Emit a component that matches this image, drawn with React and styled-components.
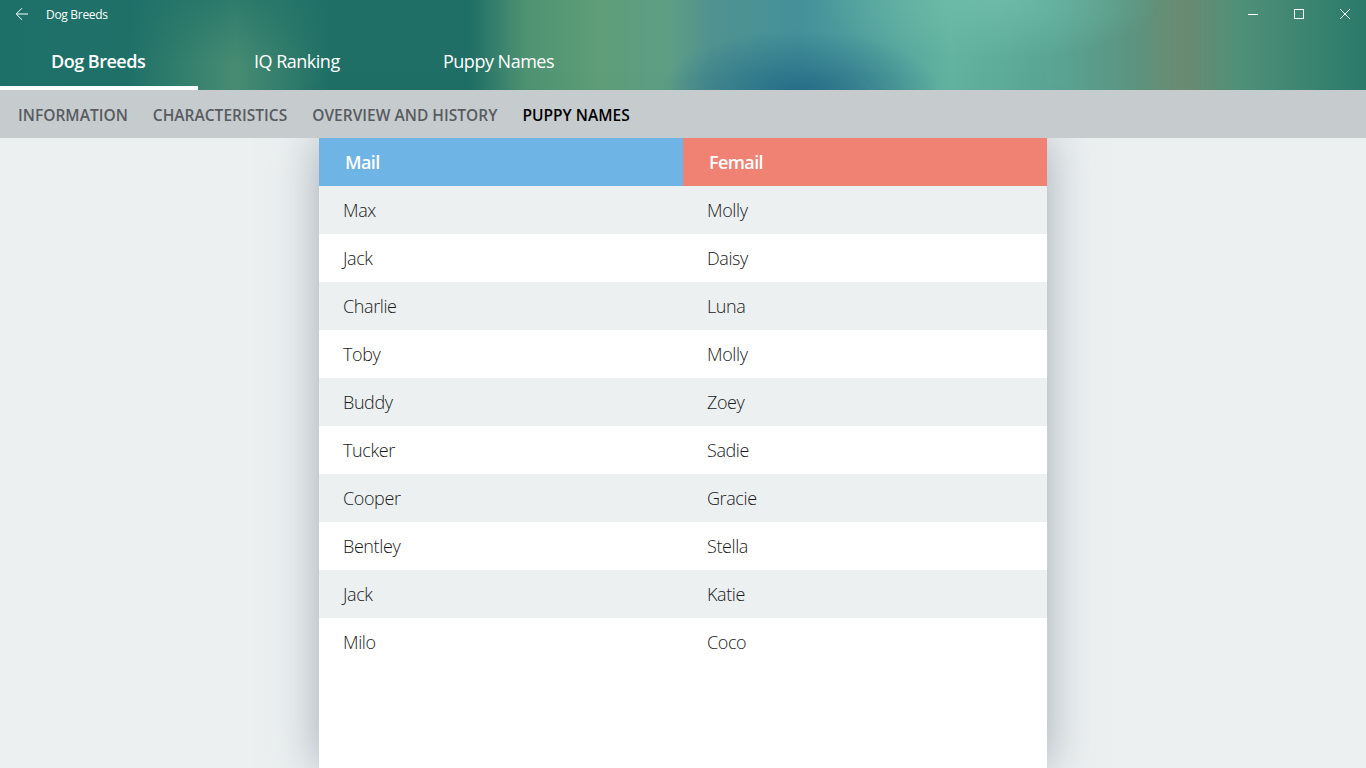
import { createGlobalStyle } from 'styled-components';
import styled from 'styled-components';

const males = ['Max', 'Jack', 'Charlie', 'Toby', 'Buddy', 'Tucker', 'Cooper', 'Bentley', 'Jack', 'Milo'];
const females = ['Molly', 'Daisy', 'Luna', 'Molly', 'Zoey', 'Sadie', 'Gracie', 'Stella', 'Katie', 'Coco'];
const mainTabs = ['Dog Breeds', 'IQ Ranking', 'Puppy Names'];
const subTabs = ['INFORMATION', 'CHARACTERISTICS', 'OVERVIEW AND HISTORY', 'PUPPY NAMES'];

const GlobalStyle = createGlobalStyle`
  html, body {
    margin: 0;
    height: 100%;
    overflow: hidden;
    background: #ecf0f1;
    font-family: "Open Sans", "Noto Sans", sans-serif;
  }
`;

const Page = styled.div`
  height: 768px;
  display: flex;
  flex-direction: column;
`;

const Header = styled.header`
  height: 90px;
  flex: none;
  display: flex;
  flex-direction: column;
  color: #fff;
  background:
    radial-gradient(ellipse 140px 62px at 800px 92px, rgba(36, 108, 135, 0.95), rgba(36, 108, 135, 0) 100%),
    radial-gradient(ellipse 170px 60px at 990px 0px, rgba(112, 190, 170, 0.8), rgba(112, 190, 170, 0) 100%),
    linear-gradient(180deg, rgba(30, 112, 104, 0.6) 0%, rgba(30, 112, 104, 0) 70%) 130px 0 / 200px 100% no-repeat,
    linear-gradient(
      90deg,
      #1d7068 0px,
      #1f7168 130px,
      #478c72 235px,
      #1f6f66 330px,
      #206f66 470px,
      #4d9272 525px,
      #5f9e78 600px,
      #5e9e85 670px,
      #50928f 710px,
      #44919a 800px,
      #62b3a0 950px,
      #5aa595 1050px,
      #5b9480 1130px,
      #6b8a72 1185px,
      #4f9078 1240px,
      #2a7a6a 1366px
    );
`;

const TitleBar = styled.div`
  height: 28px;
  flex: none;
  display: flex;
  align-items: center;
  padding-left: 15px;
`;

const BackIcon = styled.svg`
  width: 14px;
  height: 14px;
  margin-right: 17px;
  fill: none;
  stroke: #fff;
  stroke-width: 1;
`;

const AppTitle = styled.span`
  font-size: 12px;
  letter-spacing: -0.3px;
`;

const WindowButtons = styled.div`
  margin-left: auto;
  margin-right: -2px;
  display: flex;
`;

const WindowButton = styled.div`
  width: 46px;
  height: 28px;
  display: flex;
  align-items: center;
  justify-content: center;

  svg {
    width: 10px;
    height: 10px;
    fill: none;
    stroke: #fff;
    stroke-width: 1;
  }
`;

const MainTabs = styled.nav`
  flex: 1;
  display: flex;
`;

const MainTab = styled.div`
  width: ${p => p.$width}px;
  box-sizing: border-box;
  padding: 7px 0 0 ${p => p.$inset}px;
  display: flex;
  align-items: center;
  font-size: 18px;
  font-weight: ${p => (p.$active ? 600 : 400)};
  letter-spacing: -0.5px;
  border-bottom: 4px solid ${p => (p.$active ? '#fff' : 'transparent')};
`;

const SubNav = styled.nav`
  position: relative;
  z-index: 1;
  height: 48px;
  flex: none;
  display: flex;
  align-items: center;
  gap: 25px;
  padding: 2px 0 0 18px;
  box-sizing: border-box;
  background: #c6cbce;
`;

const SubTab = styled.div`
  font-size: 15.5px;
  font-weight: 600;
  letter-spacing: 0.02px;
  color: ${p => (p.$active ? '#000' : '#585c5f')};
`;

const Content = styled.main`
  flex: 1;
  min-height: 0;
  display: flex;
  justify-content: center;
`;

const Sheet = styled.section`
  width: 728px;
  background: #fff;
  box-shadow: 0 0 44px rgba(90, 105, 120, 0.5);
`;

const Row = styled.div`
  height: 48px;
  display: grid;
  grid-template-columns: 1fr 1fr;
  background: ${p => (p.$striped ? '#ecf0f1' : '#fff')};
`;

const HeadCell = styled.div`
  display: flex;
  align-items: center;
  padding-left: 26px;
  font-size: 18px;
  font-weight: 600;
  letter-spacing: -0.6px;
  color: #fff;
  background: ${p => p.$color};
`;

const Cell = styled.div`
  display: flex;
  align-items: center;
  padding-left: 24px;
  font-size: 18px;
  font-weight: 300;
  letter-spacing: -0.4px;
  color: #1a1a1a;
`;

export default function App() {
  return (
    <Page>
      <GlobalStyle />
      <Header>
        <TitleBar>
          <BackIcon viewBox="0 0 14 14">
            <path d="M13 7H1.5M7 1.2 1.2 7 7 12.8" />
          </BackIcon>
          <AppTitle>Dog Breeds</AppTitle>
          <WindowButtons>
            <WindowButton>
              <svg viewBox="0 0 10 10"><path d="M0 5.5h11" /></svg>
            </WindowButton>
            <WindowButton>
              <svg viewBox="0 0 10 10"><rect x="0.5" y="0.5" width="9" height="9" /></svg>
            </WindowButton>
            <WindowButton>
              <svg viewBox="0 0 10 10"><path d="M0 0l10 10M10 0 0 10" /></svg>
            </WindowButton>
          </WindowButtons>
        </TitleBar>
        <MainTabs>
          <MainTab $active $width={198} $inset={51}>{mainTabs[0]}</MainTab>
          <MainTab $width={189} $inset={56}>{mainTabs[1]}</MainTab>
          <MainTab $width={200} $inset={56}>{mainTabs[2]}</MainTab>
        </MainTabs>
      </Header>
      <SubNav>
        {subTabs.map((tab, i) => (
          <SubTab key={tab} $active={i === 3}>{tab}</SubTab>
        ))}
      </SubNav>
      <Content>
        <Sheet>
          <Row>
            <HeadCell $color="#6eb4e5">Mail</HeadCell>
            <HeadCell $color="#f08274">Femail</HeadCell>
          </Row>
          {males.map((name, i) => (
            <Row key={i} $striped={i % 2 === 0}>
              <Cell>{name}</Cell>
              <Cell>{females[i]}</Cell>
            </Row>
          ))}
        </Sheet>
      </Content>
    </Page>
  );
}
